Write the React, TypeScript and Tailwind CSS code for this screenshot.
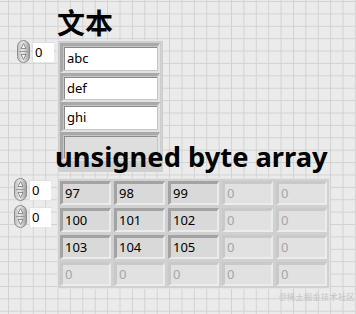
import React from "react";

const Spinner = () => (
  <svg width="13" height="23" viewBox="0 0 13 23">
    <defs>
      <linearGradient id="sg" x1="0" y1="0" x2="1" y2="0">
        <stop offset="0" stopColor="#bdbdbd" />
        <stop offset="0.45" stopColor="#e8e8e8" />
        <stop offset="1" stopColor="#9c9c9c" />
      </linearGradient>
    </defs>
    <rect x="0.5" y="0.5" width="12" height="22" rx="6" fill="url(#sg)" stroke="#8c8c8c" />
    <line x1="2" y1="11.5" x2="11" y2="11.5" stroke="#9a9a9a" />
    <path d="M6.5 3.5 L9 8.5 L4 8.5 Z" fill="#f4f4f4" stroke="#777" strokeWidth="0.8" />
    <path d="M6.5 19.5 L9 14.5 L4 14.5 Z" fill="#f4f4f4" stroke="#777" strokeWidth="0.8" />
  </svg>
);

const IndexBox = () => (
  <div className="flex items-start">
    <Spinner />
    <div className="ml-[2px] mt-[2px] w-[22px] h-[20px] bg-white border-t border-l border-[#e0e0e0] text-[13px] leading-[19px] pl-[2px] text-black">
      0
    </div>
  </div>
);

const StrEl = ({ t }: { t: string }) => (
  <div className="h-[29.5px] w-[100px] border-t-[3px] border-l-[3px] border-b-[2px] border-r-[2px] border-t-[#a9a9a9] border-l-[#a9a9a9] border-b-[#e2e2e2] border-r-[#e2e2e2] bg-[#c6c6c6] p-[1px]">
    <div
      className={
        "h-full w-full border-t border-l border-[#8a8a8a] text-[13px] leading-[20px] pl-[2px] text-black " +
        (t === "" ? "bg-[#dedede]" : "bg-white")
      }
    >
      {t}
    </div>
  </div>
);

const NumCell = ({ v, empty }: { v: string; empty?: boolean }) => (
  <div
    className={
      "w-[51px] h-[24px] border-t-[3px] border-l-[3px] border-b-[2px] border-r-[2px] text-[13px] leading-[18px] pl-[2px] " +
      (empty
        ? "bg-[#e1e1e1] border-t-[#c9c9c9] border-l-[#c9c9c9] border-b-[#ececec] border-r-[#ececec] text-[#a6a6a6]"
        : "bg-[#d9d9d9] border-t-[#a3a3a3] border-l-[#a3a3a3] border-b-[#ebebeb] border-r-[#ebebeb] text-black")
    }
  >
    {v}
  </div>
);

export default function App() {
  const rows = [
    ["97", "98", "99"],
    ["100", "101", "102"],
    ["103", "104", "105"],
    [],
  ];
  return (
    <div
      className="relative w-[356px] h-[314px] overflow-hidden bg-[#ebebeb] bg-[linear-gradient(to_right,#d2d2d2_1px,transparent_1px),linear-gradient(to_bottom,#d2d2d2_1px,transparent_1px)] bg-[length:12.4px_12.4px] bg-[position:8px_1px]"
      style={{ fontFamily: '"Noto Sans", "Noto Sans CJK SC", sans-serif' }}
    >
      <div className="flex flex-col pt-[6px]">
        <div className="ml-[57px] h-[34px] text-[28px] leading-[34px] font-bold text-black">文本</div>
        <div className="flex pl-[17px]">
          <IndexBox />
          <div className="ml-[3px] w-[106px] h-[132px] bg-[#cfcfcf] border-t border-l border-[#e6e6e6] pl-[2px] pt-[2px] flex flex-col">
            <StrEl t="abc" />
            <StrEl t="def" />
            <StrEl t="ghi" />
            <StrEl t="" />
          </div>
        </div>
        <div className="relative z-10 mt-[-34px] ml-[55px] h-[38px] text-[27.3px] leading-[38px] font-bold text-black whitespace-nowrap">
          unsigned byte array
        </div>
        <div className="flex mt-[2px] pl-[14px]">
          <div className="flex flex-col gap-[4px] pt-[0px]">
            <IndexBox />
            <IndexBox />
          </div>
          <div className="ml-[6px] w-[273px] h-[111px] bg-[#d0d0d0] border border-[#e4e4e4] pl-[2px] pt-[2px] flex flex-col gap-[3px]">
            {rows.map((r, i) => (
              <div key={i} className="flex gap-[3px]">
                {[0, 1, 2, 3, 4].map((j) => (
                  <NumCell key={j} v={r[j] ?? "0"} empty={r[j] === undefined} />
                ))}
              </div>
            ))}
          </div>
        </div>
      </div>
      <div className="absolute left-[279px] top-[291px] text-[8.5px] leading-[12px] text-[#c4c4c4] whitespace-nowrap">
        @稀土掘金技术社区
      </div>
    </div>
  );
}
